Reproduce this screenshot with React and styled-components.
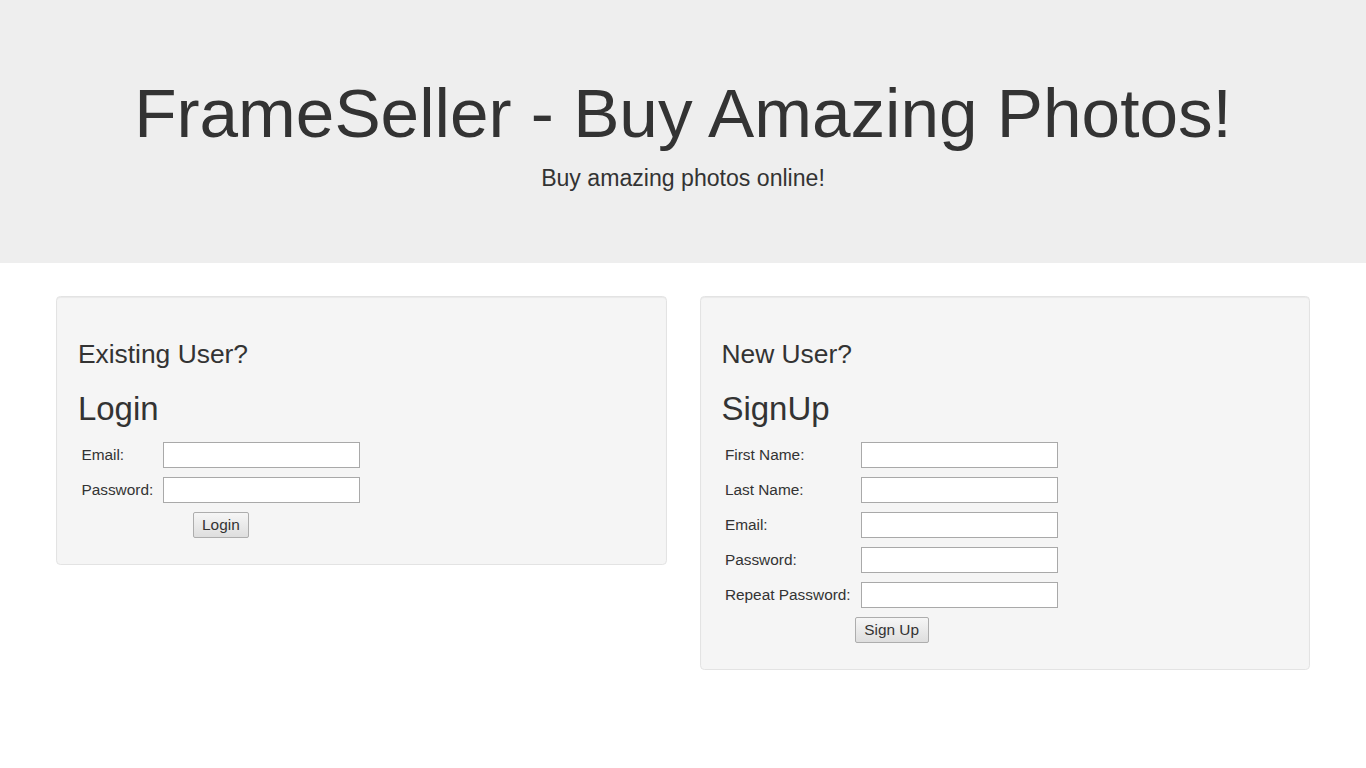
import styled, { createGlobalStyle } from "styled-components";

const GlobalStyle = createGlobalStyle`
  html, body {
    margin: 0;
    padding: 0;
    background: #fff;
  }
  body {
    font-family: "Liberation Sans", Arial, sans-serif;
    font-size: 15.4px;
    line-height: 1.42857;
    color: #333;
  }
  * {
    box-sizing: border-box;
  }
`;

const Jumbotron = styled.header`
  background: #eee;
  padding: 52.8px 0 52.8px;
  margin-bottom: 33px;
  text-align: center;
`;

const Title = styled.h1`
  margin: 22px 0 11px;
  font-size: 69.3px;
  font-weight: 400;
  line-height: 1.1;
  color: #333;
`;

const Lead = styled.p`
  margin: 0 0 15px;
  font-size: 23.1px;
  line-height: 33px;
`;

const Columns = styled.main`
  width: 1254px;
  margin: 0 auto;
  display: grid;
  grid-template-columns: 1fr 1fr;
  column-gap: 33px;
  align-items: start;
`;

const Well = styled.section`
  background: #f5f5f5;
  border: 1px solid #e3e3e3;
  border-radius: 4.4px;
  box-shadow: inset 0 1px 1px rgba(0, 0, 0, 0.05);
  padding: 20.9px;
`;

const Question = styled.h3`
  margin: 22px 0 11px;
  font-size: 26.4px;
  font-weight: 400;
  line-height: 1.1;
`;

const FormTitle = styled.h2`
  margin: 22px 0 11px;
  font-size: 33px;
  font-weight: 400;
  line-height: 1.1;
`;

const FormGrid = styled.form`
  display: inline-grid;
  grid-template-columns: ${(p) => p.$labelWidth}px 201px;
  grid-auto-rows: 26px;
  row-gap: 9px;
  padding: 4px 0 4.8px 0;
  align-items: center;
`;

const Label = styled.label`
  padding-left: 3.5px;
  font-size: 15.4px;
  line-height: 1;
  white-space: nowrap;
`;

const Input = styled.input`
  justify-self: start;
  width: 197px;
  height: 26px;
  margin: 0;
  padding: 1px 2px;
  border: 1px solid #a9a9a9;
  background: #fff;
  font: inherit;
`;

const Button = styled.button`
  grid-column: 1 / -1;
  justify-self: center;
  height: 26px;
  padding: 0 8.5px;
  margin: 0;
  border: 1px solid #adadad;
  border-radius: 2px;
  background: linear-gradient(#f6f6f6, #dedede);
  font-family: "Liberation Sans", Arial, sans-serif;
  font-size: 15.4px;
  color: #333;
  line-height: 1;
`;

const loginFields = [
  { id: "email", label: "Email:", type: "email" },
  { id: "password", label: "Password:", type: "password" },
];

const signupFields = [
  { id: "firstName", label: "First Name:", type: "text" },
  { id: "lastName", label: "Last Name:", type: "text" },
  { id: "signupEmail", label: "Email:", type: "email" },
  { id: "signupPassword", label: "Password:", type: "password" },
  { id: "repeatPassword", label: "Repeat Password:", type: "password" },
];

const AuthForm = ({ question, title, fields, labelWidth, submit }) => (
  <Well>
    <Question>{question}</Question>
    <FormTitle>{title}</FormTitle>
    <FormGrid $labelWidth={labelWidth} onSubmit={(e) => e.preventDefault()}>
      {fields.flatMap((f) => [
        <Label key={f.id + "-l"} htmlFor={f.id}>
          {f.label}
        </Label>,
        <Input key={f.id} id={f.id} type={f.type} />,
      ])}
      <Button type="submit">{submit}</Button>
    </FormGrid>
  </Well>
);

export default function App() {
  return (
    <>
      <GlobalStyle />
      <Jumbotron>
        <Title>FrameSeller - Buy Amazing Photos!</Title>
        <Lead>Buy amazing photos online!</Lead>
      </Jumbotron>
      <Columns>
        <AuthForm
          question="Existing User?"
          title="Login"
          fields={loginFields}
          labelWidth={85}
          submit="Login"
        />
        <AuthForm
          question="New User?"
          title="SignUp"
          fields={signupFields}
          labelWidth={139.5}
          submit="Sign Up"
        />
      </Columns>
    </>
  );
}
